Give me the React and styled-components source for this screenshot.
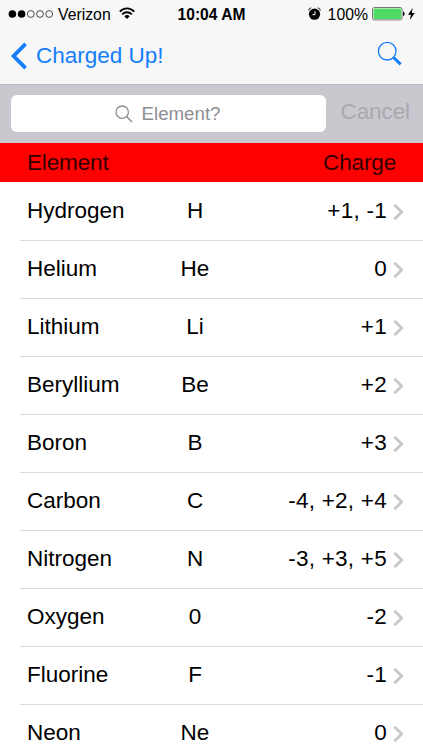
import React from "react";
import styled, { createGlobalStyle } from "styled-components";

const Color = {
  blue: "#147efb",
  bar: "#f7f7f8",
  searchBar: "#c9c8ce",
  placeholder: "#8e8e93",
  disabled: "#a9a9ae",
  header: "#ff0000",
  line: "#d9d9db",
  chevron: "#c7c7cc",
  battery: "#4cd964",
};

const elements = [
  { name: "Hydrogen", symbol: "H", charge: "+1, -1" },
  { name: "Helium", symbol: "He", charge: "0" },
  { name: "Lithium", symbol: "Li", charge: "+1" },
  { name: "Beryllium", symbol: "Be", charge: "+2" },
  { name: "Boron", symbol: "B", charge: "+3" },
  { name: "Carbon", symbol: "C", charge: "-4, +2, +4" },
  { name: "Nitrogen", symbol: "N", charge: "-3, +3, +5" },
  { name: "Oxygen", symbol: "0", charge: "-2" },
  { name: "Fluorine", symbol: "F", charge: "-1" },
  { name: "Neon", symbol: "Ne", charge: "0" },
];

const Signal = () => (
  <svg width="46" height="10" viewBox="0 0 46 10">
    {[0, 1, 2, 3, 4].map((i) => (
      <circle
        key={i}
        cx={4.4 + i * 9.2}
        cy="5"
        r={i < 2 ? 3.8 : 3.4}
        fill={i < 2 ? "#000" : "none"}
        stroke={i < 2 ? "none" : "#222"}
        strokeWidth="0.8"
      />
    ))}
  </svg>
);

const Wifi = () => (
  <svg width="16" height="13" viewBox="0 0 16 13" fill="none" stroke="#000" strokeWidth="1.9">
    <path d="M0.8 4.6 C4.8 0.3 11.2 0.3 15.2 4.6" />
    <path d="M3.2 7.4 C5.9 4.6 10.1 4.6 12.8 7.4" />
    <path d="M8 12 L5.3 9.2 C6.8 7.7 9.2 7.7 10.7 9.2 Z" fill="#000" stroke="none" />
  </svg>
);

const Alarm = () => (
  <svg width="13" height="14" viewBox="0 0 13 14">
    <circle cx="6.5" cy="7.2" r="5.6" />
    <path d="M0.8 3.4 C0.8 2 1.8 1 3.2 1 M12.2 3.4 C12.2 2 11.2 1 9.8 1" fill="none" stroke="#000" strokeWidth="1" />
    <path d="M7 4.2 V7.7 H4.4" fill="none" stroke="#fff" strokeWidth="1" />
  </svg>
);

const Battery = () => (
  <svg width="33" height="14" viewBox="0 0 33 14">
    <rect x="0.5" y="0.5" width="29.6" height="12.4" rx="1.8" fill="#fff" stroke="#555" strokeWidth="0.8" />
    <rect x="1.5" y="1.5" width="27.6" height="10.4" rx="0.8" fill={Color.battery} />
    <path d="M31 4.5 C33.1 4.7 33.1 8.7 31 8.9 Z" />
  </svg>
);

const Bolt = () => (
  <svg width="7" height="12" viewBox="0 0 7 12">
    <path d="M4.7 0 L0 6.7 H2.9 L1.8 12 L6.8 5 H3.8 Z" />
  </svg>
);

const BackArrow = () => (
  <svg width="17" height="28" viewBox="0 0 17 28">
    <path d="M15.6 1.9 L3.6 14 L15.6 26.1" fill="none" stroke={Color.blue} strokeWidth="3.8" />
  </svg>
);

const SearchIcon = () => (
  <svg width="25" height="25" viewBox="0 0 25 25" fill="none" stroke={Color.blue}>
    <circle cx="10.2" cy="10.2" r="8.8" strokeWidth="1.3" />
    <path d="M16.4 16.3 L23.6 23.4" strokeWidth="3" />
  </svg>
);

const FieldGlass = () => (
  <svg width="18" height="18" viewBox="0 0 18 18" fill="none" stroke={Color.placeholder} strokeWidth="1.3">
    <circle cx="7.2" cy="7.2" r="6.2" />
    <path d="M11.7 11.7 L17 17" strokeWidth="1.5" />
  </svg>
);

const Chevron = () => (
  <svg width="11" height="18" viewBox="0 0 11 18">
    <path d="M1.4 1.7 L8.7 9 L1.4 16.3" fill="none" stroke={Color.chevron} strokeWidth="2.8" />
  </svg>
);

export default function App() {
  return (
    <Screen>
      <GlobalStyle />
      <TopBar>
        <StatusBar>
          <Carrier>
            <Signal />
            <span>Verizon</span>
            <Wifi />
          </Carrier>
          <Time>10:04 AM</Time>
          <Power>
            <Alarm />
            <span>100%</span>
            <Battery />
            <Bolt />
          </Power>
        </StatusBar>
        <NavBar>
          <BackButton>
            <BackArrow />
            <span>Charged Up!</span>
          </BackButton>
          <SearchButton aria-label="Search">
            <SearchIcon />
          </SearchButton>
        </NavBar>
      </TopBar>

      <SearchBar>
        <SearchField>
          <FieldGlass />
          <span>Element?</span>
        </SearchField>
        <Cancel disabled>Cancel</Cancel>
      </SearchBar>

      <TableHeader>
        <span>Element</span>
        <span>Charge</span>
      </TableHeader>

      <List>
        {elements.map(({ name, symbol, charge }) => (
          <Row key={name}>
            <span>{name}</span>
            <Symbol>{symbol}</Symbol>
            <Charge>{charge}</Charge>
            <Chevron />
          </Row>
        ))}
      </List>
    </Screen>
  );
}

const GlobalStyle = createGlobalStyle`
  * {
    box-sizing: border-box;
  }
  body {
    margin: 0;
    overflow: hidden;
  }
  button {
    padding: 0;
    border: 0;
    background: none;
    font: inherit;
  }
  svg {
    display: block;
    flex-shrink: 0;
  }
`;

const Screen = styled.div`
  width: 423px;
  height: 750px;
  display: flex;
  flex-direction: column;
  overflow: hidden;
  background-color: #fff;
  color: #000;
  font-family: "Liberation Sans", Arial, sans-serif;
  font-size: 22.5px;
  line-height: 26px;
  white-space: nowrap;
`;

const TopBar = styled.header`
  flex: none;
  height: 85px;
  background-color: ${Color.bar};
  border-bottom: 1px solid #b9b9bd;
`;

const StatusBar = styled.div`
  height: 27px;
  padding: 1px 8px 0;
  display: grid;
  grid-template-columns: 1fr auto 1fr;
  align-items: center;
  font-size: 15.8px;
  line-height: 18px;
`;

const Carrier = styled.div`
  display: flex;
  align-items: center;
  span {
    margin: 1px 8px 0 4px;
  }
  svg:last-child {
    margin-bottom: 1px;
  }
`;

const Time = styled.span`
  font-size: 15.6px;
  font-weight: bold;
  margin-top: 1px;
`;

const Power = styled.div`
  display: flex;
  align-items: center;
  justify-content: flex-end;
  span {
    margin: 1px 4px 0 7px;
  }
  svg:last-child {
    margin-left: 3px;
  }
`;

const NavBar = styled.div`
  height: 57px;
  padding: 0 21px 0 10px;
  display: flex;
  justify-content: space-between;
  align-items: center;
`;

const BackButton = styled.button`
  display: flex;
  align-items: center;
  gap: 9px;
  color: ${Color.blue};
`;

const SearchButton = styled.button`
  margin-bottom: 4px;
`;

const SearchBar = styled.div`
  flex: none;
  height: 58px;
  padding: 10px 13px 11px 11px;
  display: flex;
  justify-content: space-between;
  background-color: ${Color.searchBar};
`;

const SearchField = styled.div`
  width: 315px;
  height: 37px;
  padding-right: 2px;
  display: flex;
  align-items: center;
  justify-content: center;
  gap: 9px;
  border-radius: 6px;
  background-color: #fff;
  color: ${Color.placeholder};
  font-size: 18.7px;
`;

const Cancel = styled.button`
  height: 34px;
  color: ${Color.disabled};
  letter-spacing: -0.1px;
`;

const TableHeader = styled.div`
  flex: none;
  height: 39px;
  padding: 0 27px;
  display: flex;
  justify-content: space-between;
  align-items: center;
  background-color: ${Color.header};
  color: #300;
  letter-spacing: -0.15px;
`;

const List = styled.ul`
  margin: 0;
  padding: 1px 0 0 20px;
  list-style: none;
`;

const Row = styled.li`
  height: 58px;
  padding: 0 19px 1px 7px;
  display: grid;
  grid-template-columns: 118px 100px 1fr auto;
  align-items: center;
  border-bottom: 1px solid ${Color.line};
  svg {
    margin: 2px 0 0 6px;
  }
`;

const Symbol = styled.span`
  text-align: center;
`;

const Charge = styled.span`
  text-align: right;
  letter-spacing: 0.25px;
`;
